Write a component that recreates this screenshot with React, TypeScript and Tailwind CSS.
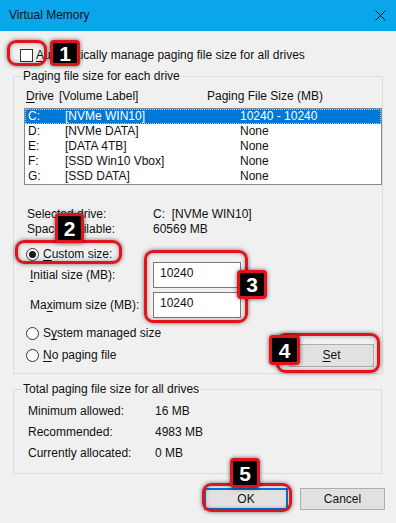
import type { ReactNode } from 'react';

const DRIVES = [
  { letter: 'C:', label: '[NVMe WIN10]', size: '10240 - 10240', selected: true },
  { letter: 'D:', label: '[NVMe DATA]', size: 'None' },
  { letter: 'E:', label: '[DATA 4TB]', size: 'None' },
  { letter: 'F:', label: '[SSD Win10 Vbox]', size: 'None' },
  { letter: 'G:', label: '[SSD DATA]', size: 'None' },
];

const TOTALS = [
  { label: 'Minimum allowed:', value: '16 MB' },
  { label: 'Recommended:', value: '4983 MB' },
  { label: 'Currently allocated:', value: '0 MB' },
];

function Radio({ checked }: { checked?: boolean }) {
  return (
    <span className="flex h-[13px] w-[13px] shrink-0 items-center justify-center rounded-full border border-[#333] bg-white">
      {checked && <span className="h-[7px] w-[7px] rounded-full bg-[#1a1a1a]" />}
    </span>
  );
}

function Button({ children, primary, className }: { children: ReactNode; primary?: boolean; className: string }) {
  return (
    <div
      className={`flex h-[22px] items-center justify-center bg-[#e1e1e1] ${
        primary ? 'border border-[#0078d7] shadow-[inset_0_0_0_1px_#0078d7]' : 'border border-[#adadad]'
      } ${className}`}
    >
      {children}
    </div>
  );
}

function Ring({ className }: { className: string }) {
  return (
    <div
      className={`pointer-events-none absolute rounded-[9px] border-[3px] border-[#e3131c] shadow-[0_0_4px_rgba(0,0,0,0.55),inset_0_0_4px_rgba(0,0,0,0.35)] ${className}`}
    />
  );
}

function Badge({ n, className }: { n: string; className: string }) {
  return (
    <div
      className={`absolute flex items-center justify-center rounded-[4px] border-[3px] border-[#e3131c] bg-black text-[21px] font-bold leading-none text-white shadow-[0_0_4px_rgba(0,0,0,0.6)] ${className}`}
    >
      {n}
    </div>
  );
}

export default function App() {
  return (
    <div className="relative h-[523px] w-[396px] overflow-hidden bg-[#f0f0f0] font-['Segoe_UI','Liberation_Sans',Arial,sans-serif] text-[12px] leading-[15px] text-[#111]">
      {/* title bar */}
      <div className="flex h-[31px] items-center justify-between bg-[#0aa6ec] pl-[9px] pr-[10px]">
        <span className="text-[#111]">Virtual Memory</span>
        <svg width="11" height="11" viewBox="0 0 11 11" className="text-[#111]">
          <path d="M0.5 0.5 L10.5 10.5 M10.5 0.5 L0.5 10.5" stroke="currentColor" strokeWidth="1" />
        </svg>
      </div>

      <div className="pt-[17px]">
        <div className="ml-[20px] flex h-[15px] items-center gap-[3px]">
          <span className="h-[13px] w-[13px] border border-[#333] bg-white" />
          <span>
            <u className="underline-offset-2">A</u>utomatically manage paging file size for all drives
          </span>
        </div>

        <fieldset className="ml-[13px] mt-[6px] w-[369px] border border-[#dcdcdc] pb-[6px]">
          <legend className="ml-[8px] px-[1px]">Paging file size for each drive</legend>

          <div className="mt-[5px] flex h-[15px] items-center pl-[12px]">
            <span className="w-[33px]">
              <u className="underline-offset-2">D</u>rive
            </span>
            <span className="w-[148px]">[Volume Label]</span>
            <span>Paging File Size (MB)</span>
          </div>

          <div className="ml-[10px] mt-[4px] h-[77px] w-[358px] border border-[#828790] bg-white">
            {DRIVES.map((d) => (
              <div
                key={d.letter}
                className={`flex h-[15px] items-center pl-[3px] ${
                  d.selected ? 'bg-[#0078d7] text-white outline-1 -outline-offset-1 outline-dotted outline-[#a8d2f7]' : ''
                }`}
              >
                <span className="w-[37px]">{d.letter}</span>
                <span className="w-[175px]">{d.label}</span>
                <span>{d.size}</span>
              </div>
            ))}
          </div>

          <div className="mt-[22px] pl-[13px]">
            <div className="flex h-[15px] items-center">
              <span className="w-[126px]">Selected drive:</span>
              <span>C:&nbsp;&nbsp;[NVMe WIN10]</span>
            </div>
            <div className="flex h-[15px] items-center">
              <span className="w-[126px]">Space available:</span>
              <span>60569 MB</span>
            </div>
          </div>

          <div className="mt-[10px] flex h-[15px] items-center gap-[4px] pl-[12px]">
            <Radio checked />
            <span>
              <u className="underline-offset-2">C</u>ustom size:
            </span>
          </div>

          <div className="flex h-[26px] items-center pl-[16px]">
            <span className="w-[123px]">
              <u className="underline-offset-2">I</u>nitial size (MB):
            </span>
            <div className="h-[26px] w-[88px] border border-[#7a7a7a] bg-white pl-[6px] pt-[3px]">10240</div>
          </div>
          <div className="mt-[4px] flex h-[26px] items-center pl-[16px]">
            <span className="w-[123px]">
              Ma<u className="underline-offset-2">x</u>imum size (MB):
            </span>
            <div className="h-[26px] w-[88px] border border-[#7a7a7a] bg-white pl-[6px] pt-[3px]">10240</div>
          </div>

          <div className="mt-[8px] flex h-[15px] items-center gap-[4px] pl-[12px]">
            <Radio />
            <span>
              S<u className="underline-offset-2">y</u>stem managed size
            </span>
          </div>
          <div className="mt-[3px] flex h-[23px] items-center pl-[12px] pr-[8px]">
            <Radio />
            <span className="ml-[4px]">
              <u className="underline-offset-2">N</u>o paging file
            </span>
            <Button className="ml-auto h-[23px] w-[85px]">
              <span>
                <u className="underline-offset-2">S</u>et
              </span>
            </Button>
          </div>
        </fieldset>

        <fieldset className="ml-[13px] mt-[8px] w-[369px] border border-[#dcdcdc] pb-[12px]">
          <legend className="ml-[8px] px-[1px]">Total paging file size for all drives</legend>
          <div className="mt-[7px] flex flex-col gap-[6px] pl-[14px]">
            {TOTALS.map((t) => (
              <div key={t.label} className="flex h-[15px] items-center">
                <span className="w-[127px]">{t.label}</span>
                <span>{t.value}</span>
              </div>
            ))}
          </div>
        </fieldset>

        <div className="mt-[14px] flex justify-end gap-[12px] pr-[11px]">
          <Button primary className="w-[84px]">
            OK
          </Button>
          <Button className="w-[85px]">Cancel</Button>
        </div>
      </div>

      {/* annotations */}
      <Ring className="left-[7px] top-[40px] h-[26px] w-[40px]" />
      <Ring className="left-[15px] top-[240px] h-[24px] w-[107px]" />
      <Ring className="left-[144px] top-[250px] h-[73px] w-[104px]" />
      <Ring className="left-[276px] top-[333px] h-[40px] w-[104px]" />
      <Ring className="left-[202px] top-[483px] h-[29px] w-[90px]" />

      <Badge n="1" className="left-[50px] top-[40px] h-[26px] w-[30px]" />
      <Badge n="2" className="left-[55px] top-[213px] h-[30px] w-[29px]" />
      <Badge n="3" className="left-[237px] top-[270px] h-[29px] w-[30px]" />
      <Badge n="4" className="left-[269px] top-[335px] h-[30px] w-[31px]" />
      <Badge n="5" className="left-[230px] top-[458px] h-[30px] w-[30px]" />
    </div>
  );
}
